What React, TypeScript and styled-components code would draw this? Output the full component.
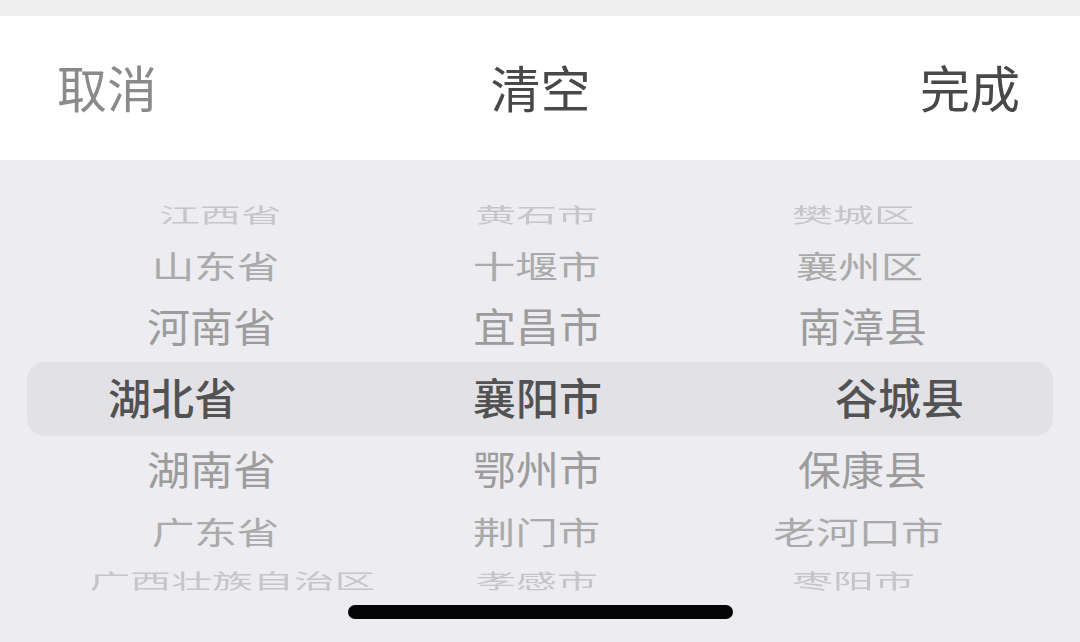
import React from "react";
import styled, { createGlobalStyle } from "styled-components";

const GlobalStyle = createGlobalStyle`
  html, body {
    margin: 0;
    padding: 0;
    background: #ececf1;
    overflow: hidden;
  }
  * { box-sizing: border-box; }
`;

const FONT = `"Noto Sans CJK SC", "Noto Sans", sans-serif`;

const Page = styled.div`
  width: 1080px;
  height: 642px;
  display: flex;
  flex-direction: column;
  background: #ececf1;
  font-family: ${FONT};
  overflow: hidden;
`;

const TopStrip = styled.div`
  height: 16px;
  background: #efeff0;
`;

const Header = styled.div`
  height: 144px;
  background: #ffffff;
  display: grid;
  grid-template-columns: 1fr auto 1fr;
  align-items: center;
  padding: 0 60px 4px 57px;
`;

const HeaderButton = styled.div<{ $align: "left" | "center" | "right"; $muted?: boolean }>`
  font-size: 50px;
  line-height: 1;
  font-weight: 400;
  color: ${(p) => (p.$muted ? "#8a8a8a" : "#484848")};
  text-align: ${(p) => p.$align};
  justify-self: ${(p) => (p.$align === "left" ? "start" : p.$align === "right" ? "end" : "center")};
  transform: ${(p) => (p.$align === "center" ? "translateX(2px)" : "none")};
`;

const Picker = styled.div`
  padding-top: 30px;
  display: flex;
  flex-direction: column;
`;

const Row = styled.div<{ $height: number; $selected?: boolean }>`
  height: ${(p) => p.$height}px;
  display: grid;
  grid-template-columns: repeat(3, 1fr);
  align-items: center;
  margin: 0 27px;
  padding: 0 28px 0 23px;
  border-radius: 18px;
  background: ${(p) => (p.$selected ? "#e1e1e6" : "transparent")};
`;

const Cell = styled.div<{ $dist: number }>`
  display: flex;
  justify-content: center;
  align-items: center;
  white-space: nowrap;
  font-size: 43px;
  line-height: 1;
  font-weight: ${(p) => (p.$dist === 0 ? 500 : 400)};
  color: ${(p) =>
    p.$dist === 0 ? "#525252" : p.$dist === 1 ? "#9c9c9c" : p.$dist === 2 ? "#aaaaaa" : "#c6c6c8"};
  filter: ${(p) => (p.$dist === 3 ? "blur(0.5px)" : "none")};
`;

const HomeBar = styled.div`
  align-self: center;
  width: 385px;
  height: 14px;
  margin-top: 7px;
  margin-left: 1px;
  border-radius: 7px;
  background: #050505;
`;

type CellData = { text: string; shift: number };
type RowData = { dist: number; height: number; cells: CellData[] };

const scaleY: Record<number, number> = { 0: 1, 1: 0.93, 2: 0.72, 3: 0.47 };
const scaleX: Record<number, number> = { 0: 1, 1: 1, 2: 0.99, 3: 0.95 };
const liftY: Record<number, number> = { 0: -3, 1: -3, 2: -2, 3: -1 };

const rows: RowData[] = [
  {
    dist: 3,
    height: 50,
    cells: [
      { text: "江西省", shift: 8 },
      { text: "黄石市", shift: -1 },
      { text: "樊城区", shift: -9 },
    ],
  },
  {
    dist: 2,
    height: 52,
    cells: [
      { text: "山东省", shift: 3 },
      { text: "十堰市", shift: -1 },
      { text: "襄州区", shift: -3 },
    ],
  },
  {
    dist: 1,
    height: 70,
    cells: [
      { text: "河南省", shift: -1 },
      { text: "宜昌市", shift: 0 },
      { text: "南漳县", shift: 0 },
    ],
  },
  {
    dist: 0,
    height: 74,
    cells: [
      { text: "湖北省", shift: -40 },
      { text: "襄阳市", shift: 0 },
      { text: "谷城县", shift: 37 },
    ],
  },
  {
    dist: 1,
    height: 68,
    cells: [
      { text: "湖南省", shift: -1 },
      { text: "鄂州市", shift: 0 },
      { text: "保康县", shift: 0 },
    ],
  },
  {
    dist: 2,
    height: 56,
    cells: [
      { text: "广东省", shift: 3 },
      { text: "荆门市", shift: -1 },
      { text: "老河口市", shift: -4 },
    ],
  },
  {
    dist: 3,
    height: 38,
    cells: [
      { text: "广西壮族自治区", shift: 20 },
      { text: "孝感市", shift: -1 },
      { text: "枣阳市", shift: -9 },
    ],
  },
];

export default function App() {
  return (
    <>
      <GlobalStyle />
      <Page>
        <TopStrip />
        <Header>
          <HeaderButton $align="left" $muted>
            取消
          </HeaderButton>
          <HeaderButton $align="center">清空</HeaderButton>
          <HeaderButton $align="right">完成</HeaderButton>
        </Header>
        <Picker>
          {rows.map((row, i) => (
            <Row key={i} $height={row.height} $selected={row.dist === 0}>
              {row.cells.map((c, j) => (
                <Cell
                  key={j}
                  $dist={row.dist}
                  style={{
                    transform: `translate(${c.shift}px, ${liftY[row.dist]}px) scale(${scaleX[row.dist]}, ${scaleY[row.dist]})`,
                  }}
                >
                  {c.text}
                </Cell>
              ))}
            </Row>
          ))}
          <HomeBar />
        </Picker>
      </Page>
    </>
  );
}
